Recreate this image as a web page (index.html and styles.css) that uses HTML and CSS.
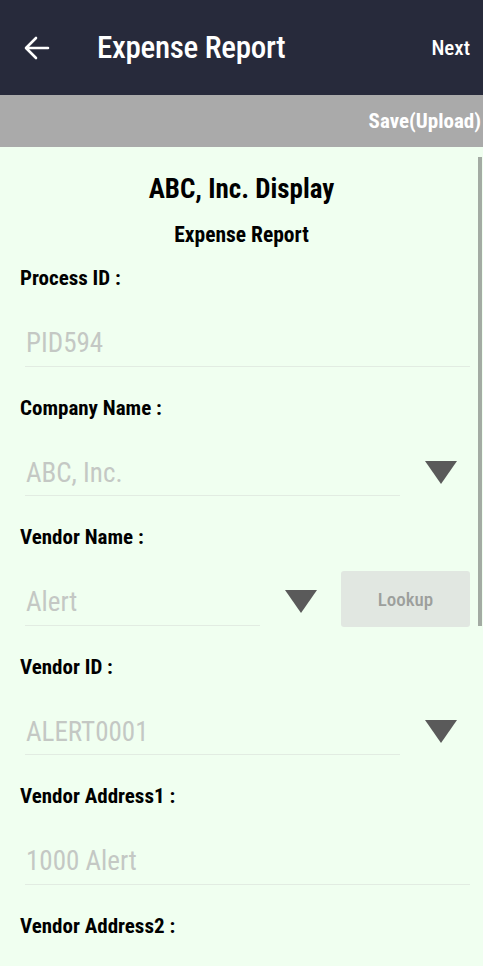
FILE: index.html
```html
<!DOCTYPE html>
<html>
<head>
<meta charset="utf-8">
<link rel="stylesheet" href="styles.css">
</head>
<body>
<div class="app">
  <header class="topbar">
    <svg class="back" width="26" height="24" viewBox="0 0 26 24"><path d="M24 12H3M12 2L2 12l10 10" fill="none" stroke="#fff" stroke-width="2.6" stroke-linecap="round" stroke-linejoin="round"/></svg>
    <div class="title">Expense Report</div>
    <div class="next">Next</div>
  </header>
  <div class="savebar"><span class="save">Save(Upload)</span></div>
  <main class="content">
    <div class="scrollbar"></div>
    <h1 class="company">ABC, Inc. Display</h1>
    <h2 class="subtitle">Expense Report</h2>

    <div class="fields">
      <section class="field">
        <div class="label">Process ID :</div>
        <div class="row"><div class="input full">PID594</div></div>
      </section>

      <section class="field">
        <div class="label">Company Name :</div>
        <div class="row"><div class="input wide">ABC, Inc.</div><div class="arrow"></div></div>
      </section>

      <section class="field">
        <div class="label">Vendor Name :</div>
        <div class="row"><div class="input narrow">Alert</div><div class="arrow"></div><div class="lookup">Lookup</div></div>
      </section>

      <section class="field">
        <div class="label">Vendor ID :</div>
        <div class="row"><div class="input wide">ALERT0001</div><div class="arrow"></div></div>
      </section>

      <section class="field">
        <div class="label">Vendor Address1 :</div>
        <div class="row"><div class="input full">1000 Alert</div></div>
      </section>

      <section class="field">
        <div class="label">Vendor Address2 :</div>
      </section>
    </div>
  </main>
</div>
</body>
</html>
```

FILE: styles.css
```css
* { box-sizing: border-box; }
html, body { margin: 0; padding: 0; }
body {
  width: 483px;
  height: 966px;
  overflow: hidden;
  font-family: Roboto, "Liberation Sans", sans-serif;
  font-stretch: 75%;
  background: #f0fff0;
}
.app { display: flex; flex-direction: column; height: 966px; }
.topbar {
  height: 95px;
  background: #272a3b;
  display: flex;
  align-items: center;
  padding: 0 13px 0 24px;
  color: #fff;
}
.back { display: block; margin-right: 47px; }
.title { font-size: 31px; font-weight: 500; flex: 1; letter-spacing: -0.3px; }
.next { font-size: 21px; font-weight: 500; }
.savebar {
  height: 52px;
  background: #aaaaaa;
  display: flex;
  align-items: center;
  justify-content: flex-end;
  padding-right: 2px;
}
.save { color: #fff; font-size: 21px; font-weight: 700; }
.content {
  position: relative;
  flex: 1;
  padding-top: 24px;
}
.scrollbar {
  position: absolute;
  right: 1px;
  top: 10px;
  width: 4px;
  height: 469px;
  background: #a3aba3;
}
.company { margin: 0; text-align: center; font-size: 27px; font-weight: 700; line-height: 36px; color: #000; }
.subtitle { margin: 15px 0 0; text-align: center; font-size: 21.5px; font-weight: 700; line-height: 26px; color: #000; }
.fields { padding: 0 13px 0 20px; }
.field { margin-top: 16px; }
.field + .field { margin-top: 13.5px; }
.label { font-size: 21px; font-weight: 700; line-height: 28px; color: #000; }
.row { display: flex; align-items: flex-start; height: 88px; }
.input {
  margin-left: 5px;
  margin-top: 28px;
  height: 46.5px;
  line-height: 46px;
  font-size: 27px;
  color: #c4c8c4;
  border-bottom: 1px solid #e2ece2;
  padding-left: 1px;
}
.full { width: 445px; }
.wide { width: 375px; }
.narrow { width: 235px; }
.arrow {
  width: 0; height: 0;
  border-left: 16px solid transparent;
  border-right: 16px solid transparent;
  border-top: 23px solid #5a5a5a;
  margin-left: 25px;
  margin-top: 39px;
}
.lookup {
  margin-left: 24px;
  margin-top: 20px;
  width: 129px;
  height: 56px;
  background: #e1e7e1;
  border-radius: 3px;
  color: #9c9f9c;
  font-size: 19px;
  font-weight: 500;
  display: flex;
  align-items: center;
  justify-content: center;
}
```
